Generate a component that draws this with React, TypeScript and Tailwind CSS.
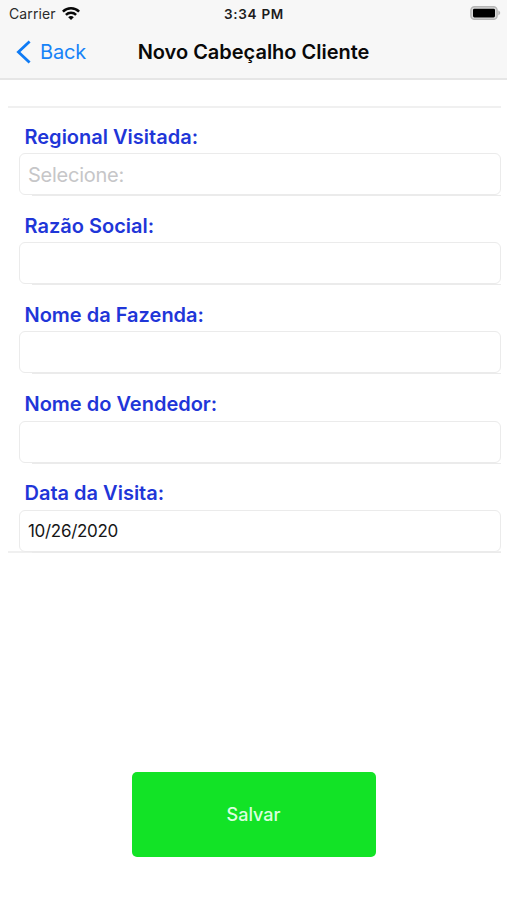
const fields = [
  { id: "regional", label: "Regional Visitada:", placeholder: "Selecione:" },
  { id: "razao", label: "Razão Social:" },
  { id: "fazenda", label: "Nome da Fazenda:" },
  { id: "vendedor", label: "Nome do Vendedor:" },
  { id: "data", label: "Data da Visita:", value: "10/26/2020" },
];

function StatusBar() {
  return (
    <div className="grid h-7 grid-cols-3 items-center pl-[9px] pr-[6px]">
      <div className="flex items-center gap-[6px]">
        <span className="text-[14px] leading-7 tracking-[0.1px] text-[#2b2b2b]">Carrier</span>
        <svg className="h-[14px] w-[18px]" viewBox="0 0 18 14" fill="none" stroke="#080808" strokeWidth="2.5">
          <path d="M0.9 4.7C5.4 0.2 12.6 0.2 17.1 4.7" />
          <path d="M3.9 7.8C6.8 5 11.2 5 14.1 7.8" />
          <path d="M9 13L6.2 10.2C7.8 8.7 10.2 8.7 11.8 10.2Z" fill="#080808" stroke="none" />
        </svg>
      </div>
      <span className="whitespace-nowrap pr-[2px] text-center text-[13.5px] font-semibold leading-7 tracking-[0.7px] text-[#1c1c1c]">
        3:34 PM
      </span>
      <svg className="-mt-[2px] h-[14px] w-[31px] justify-self-end" viewBox="0 0 31 14">
        <rect x="0.9" y="0.7" width="26.2" height="12.6" rx="3.6" fill="#dadada" stroke="#b5b5b5" strokeWidth="1.4" />
        <rect x="3" y="2.7" width="22" height="8.8" rx="1.4" fill="#000" />
        <path d="M28.3 4.6C30.8 5.5 30.8 8.5 28.3 9.4Z" fill="#b5b5b5" />
      </svg>
    </div>
  );
}

export default function App() {
  return (
    <div className="flex h-[900px] w-[507px] flex-col bg-white font-['Inter','Liberation_Sans',sans-serif]">
      <header className="h-[79.5px] border-b-2 border-[#e6e6e6] bg-[#f7f7f7]">
        <StatusBar />
        <div className="grid h-12 grid-cols-[120px_1fr_120px] items-center">
          <button className="flex items-center gap-[9px] pl-4 text-[20px] tracking-[-0.2px] text-[#1683f8]">
            <svg className="h-6 w-[15px]" viewBox="0 0 15 24" fill="none" stroke="#0f7bf5" strokeWidth="2.8">
              <path d="M13.6 1.4L2.4 12L13.6 22.6" />
            </svg>
            Back
          </button>
          <h1 className="whitespace-nowrap text-center text-[20px] font-semibold tracking-[-0.02px] text-[#090909]">
            Novo Cabeçalho Cliente
          </h1>
        </div>
      </header>

      <form className="ml-2 mr-[6px] mt-[26.5px] h-[447px] border-y-2 border-[#f0f0f0]">
        {fields.map((field) => (
          <div key={field.id} className="h-[89.2px] pl-[11px] pt-[14.6px]">
            <label
              htmlFor={field.id}
              className="block pl-[5.5px] text-[20px] font-semibold leading-7 text-[#1f36d8]"
            >
              {field.label}
            </label>
            <input
              id={field.id}
              placeholder={field.placeholder}
              defaultValue={field.value}
              className={`mt-[2.4px] block h-[42px] w-full rounded-md border border-[#ebebeb] bg-white px-2 text-[#161616] outline-none placeholder:text-[#c6c6c8] ${
                field.placeholder ? "pt-[2px] text-[20px] tracking-[-0.25px]" : "pt-px text-[17px] tracking-[-0.3px]"
              }`}
            />
            <div className="ml-[13px] h-px bg-[#ebebeb]" />
          </div>
        ))}
      </form>

      <button className="mx-auto mt-auto mb-[43px] h-[85.5px] w-[244px] rounded-[5px] bg-[#12e326] text-[18px] font-medium text-[#dcffe0]">
        Salvar
      </button>
    </div>
  );
}
